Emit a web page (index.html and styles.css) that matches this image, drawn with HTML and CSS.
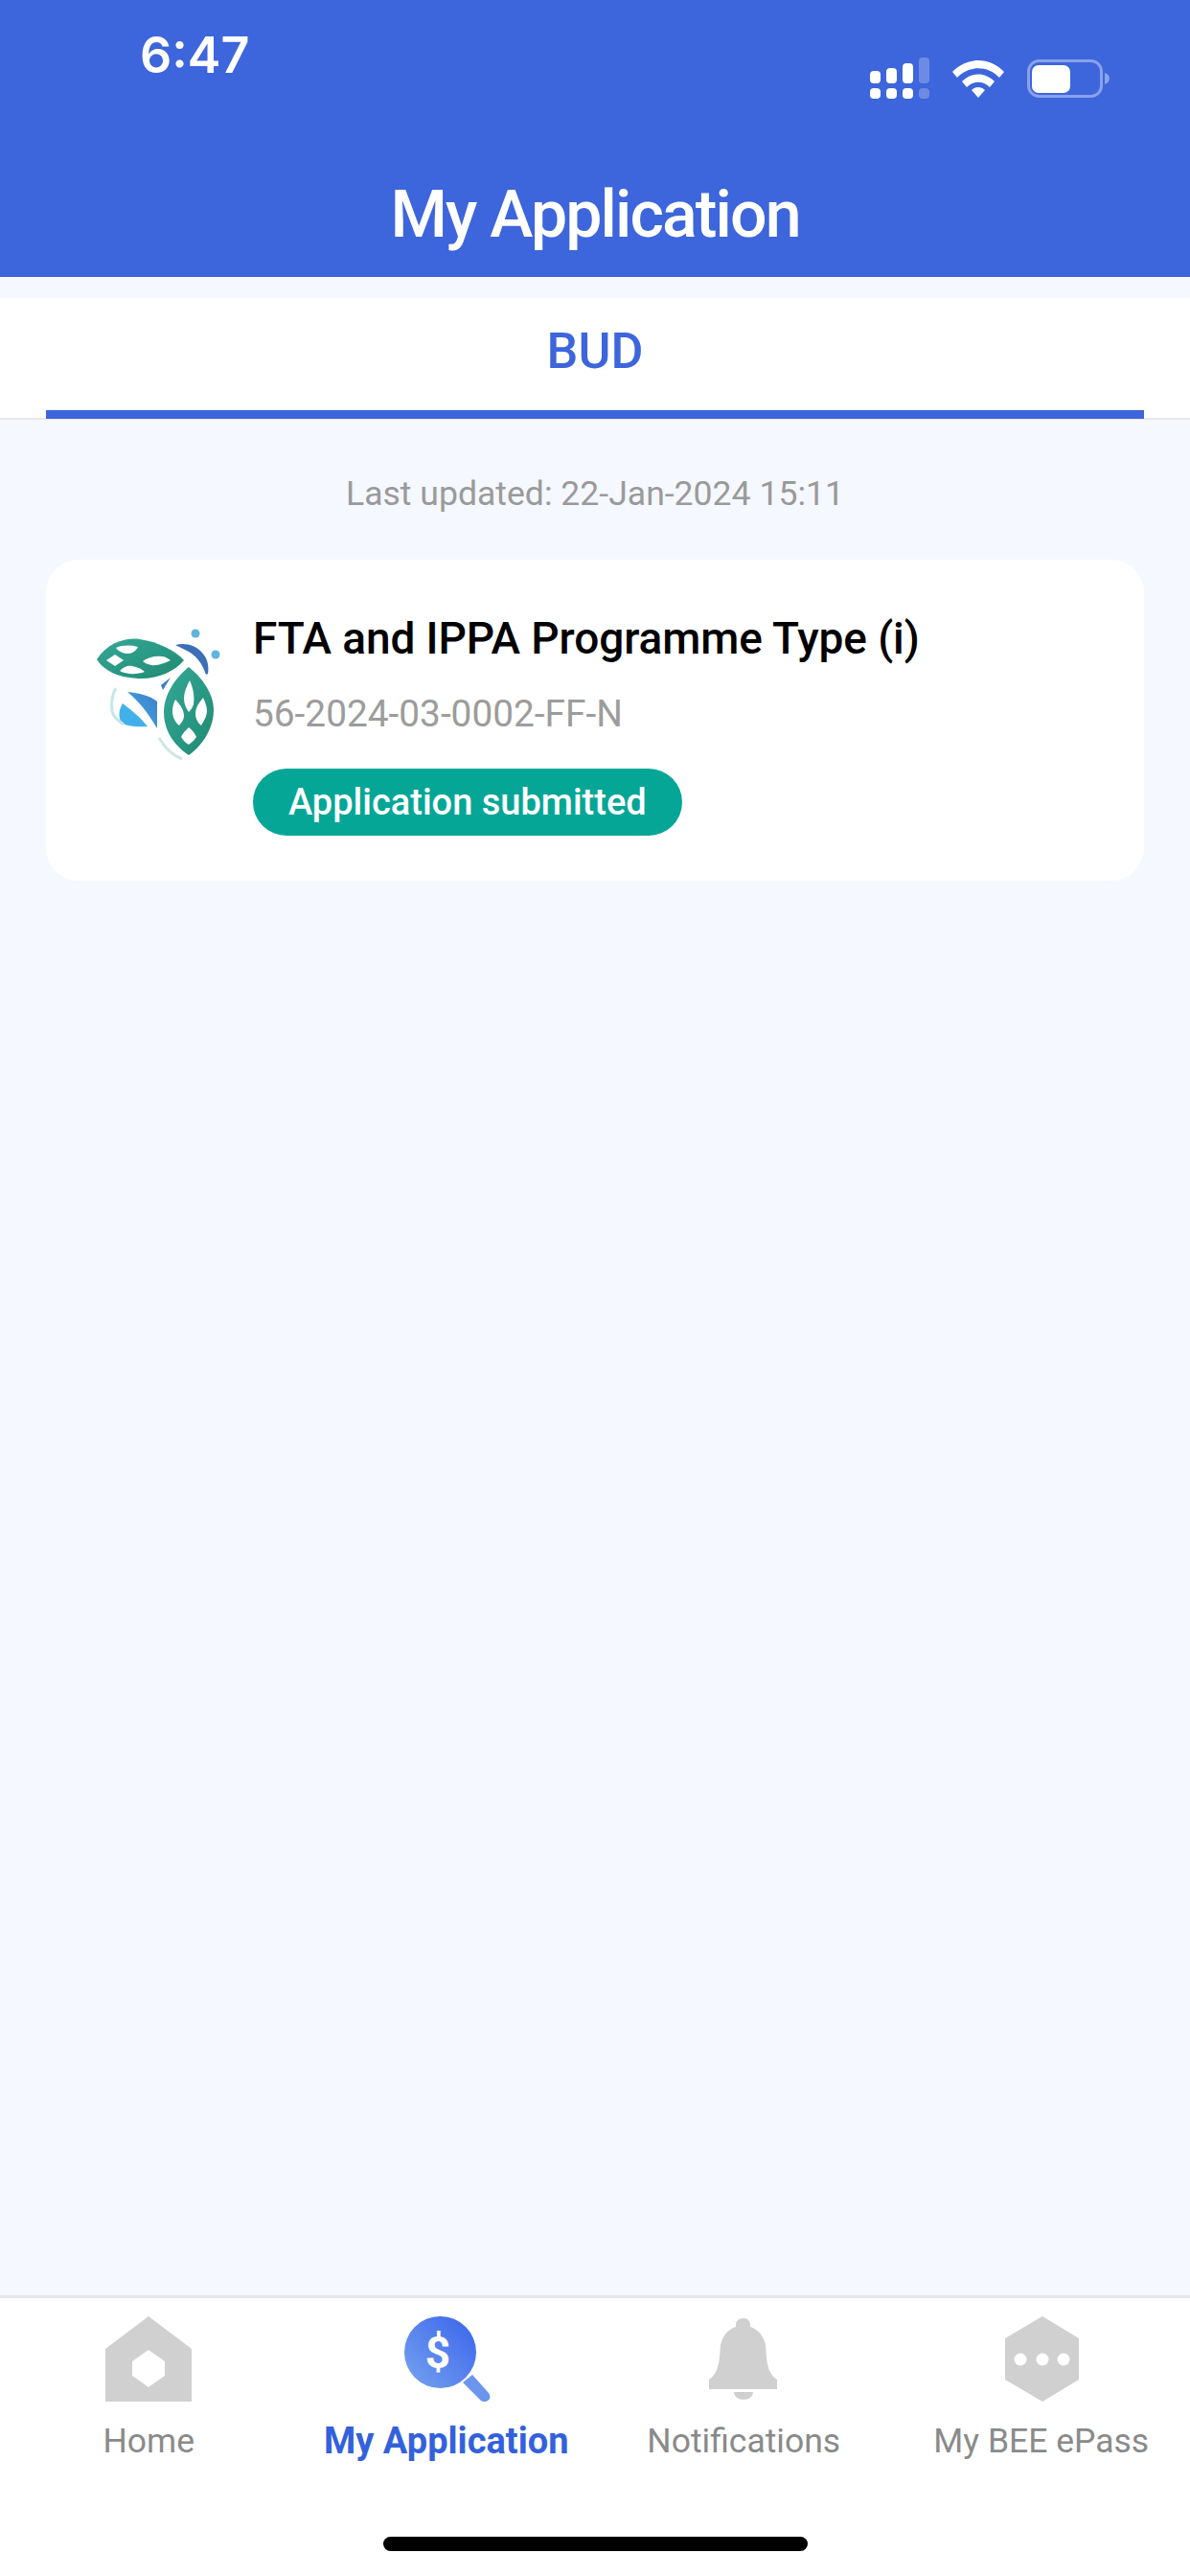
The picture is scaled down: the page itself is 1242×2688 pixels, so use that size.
FILE: index.html
```html
<!DOCTYPE html>
<html lang="en">
<head>
<meta charset="utf-8">
<title>My Application</title>
<link rel="stylesheet" href="styles.css">
</head>
<body>
<div class="app">
  <header class="header">
    <div class="status">
      <span class="time">6:47</span>
      <div class="status-icons">
        <svg class="ic-signal" width="62" height="43" viewBox="0 0 62 43">
          <g fill="#fff">
            <rect x="0" y="14" width="11" height="13" rx="4"/><rect x="17" y="11" width="11" height="16" rx="4"/><rect x="34" y="6" width="11" height="21" rx="4"/>
            <rect x="0" y="32" width="11" height="11" rx="4"/><rect x="17" y="32" width="11" height="11" rx="4"/><rect x="34" y="32" width="11" height="11" rx="4"/>
          </g>
          <g fill="#fff" fill-opacity=".25">
            <rect x="51" y="0" width="11" height="27" rx="4"/><rect x="51" y="32" width="11" height="11" rx="4"/>
          </g>
        </svg>
        <svg class="ic-wifi" width="54" height="40" viewBox="0 0 54 40">
          <path d="M0 13C15-3 39-3 54 13l-5 6C37 6 17 6 5 19z" fill="#fff"/>
          <path d="M10 23c10-10 24-10 34 0l-5 6c-7-7-17-7-24 0z" fill="#fff"/>
          <path d="M20 32c4-4 10-4 14 0l-7 8z" fill="#fff"/>
        </svg>
        <svg class="ic-batt" width="86" height="40" viewBox="0 0 86 40">
          <rect x="1.5" y="1.5" width="76" height="37" rx="11" fill="none" stroke="#fff" stroke-opacity=".4" stroke-width="3"/>
          <rect x="5" y="6" width="40" height="29" rx="7" fill="#fff"/>
          <path d="M81 14c3 1 5 3 5 6s-2 5-5 6z" fill="#fff" fill-opacity=".4"/>
        </svg>
      </div>
    </div>
    <h1 class="title">My Application</h1>
  </header>
  <div class="gap-band"></div>
  <nav class="tabs"><div class="tab">BUD</div></nav>
  <main class="content">
    <p class="updated">Last updated: 22-Jan-2024 15:11</p>
    <article class="card">
      <svg class="logo" width="170" height="160" viewBox="0 0 170 160">
        <defs>
          <linearGradient id="lf" x1="0" y1="0" x2="1" y2="1"><stop offset="0" stop-color="#35a897"/><stop offset="1" stop-color="#1f8a72"/></linearGradient>
          <linearGradient id="bl" x1="0" y1="1" x2="1" y2="0"><stop offset="0" stop-color="#41b0e8"/><stop offset="1" stop-color="#3d7dc8"/></linearGradient>
        </defs>
        <path d="M21 48C33 30 52 25 66 27c20 3 37 12 46 22-9 11-27 20-48 19C44 67 28 60 21 48z" fill="url(#lf)"/>
        <g fill="#fff">
          <path d="M31 49l9-6 9 6-9 6z"/>
          <path d="M41 36c7-3 15-3 23-1-2 4-6 7-10 7-5 0-10-2-13-6z"/>
          <path d="M45 60c4-4 8-6 13-5 5 1 10 3 13 6-8 3-19 3-26-1z"/>
          <path d="M69 50c5-4 13-6 20-5 3 0 6 2 9 4-6 3-14 6-20 5-4-1-7-2-9-4z"/>
        </g>
        <path d="M117 56c14 11 26 28 26 45 0 20-13 38-26 47-15-10-26-25-26-45 0-18 12-36 26-47z" fill="url(#lf)"/>
        <g fill="#fff">
          <path d="M118 70c4 9 5 17 4 25-1 3-3 6-5 8-3-4-5-9-5-14 0-7 3-13 6-19z"/>
          <path d="M103 90c5 5 9 11 9 17 0 3-2 7-5 10-5-4-7-10-7-15 0-4 1-8 3-12z"/>
          <path d="M132 88c2 4 4 9 4 14 0 5-3 10-6 15-4-3-6-8-6-12 0-7 4-12 8-17z"/>
          <path d="M117 119c4 3 6 6 8 10-2 3-5 6-8 8-4-2-6-5-8-8 2-4 5-7 8-10z"/>
        </g>
        <circle cx="124" cy="21" r="4.5" fill="#5fb3dd"/>
        <circle cx="145" cy="43" r="4.5" fill="#5fb3dd"/>
        <path d="M103 33c12-3 24 1 31 12 3 5 4 12 3 18l-2 1c-4-12-11-21-20-25-4-2-8-4-12-6z" fill="#3b6fb8"/>
        <path d="M88 75l10-8-8 13z" fill="#3b7fc4"/>
        <path d="M53 82c12 1 24 4 31 10v28c-5-8-14-24-31-38z" fill="url(#bl)"/>
        <path d="M48 94c9 7 18 14 26 24-10 1-22 0-27-4-4-5-3-14 1-20z" fill="#42b1e9"/>
        <path d="M41 78c-4 6-5 14-4 24 1 6 6 10 12 14" fill="none" stroke="#c3e6ea" stroke-width="3"/>
        <path d="M86 130c6 10 13 18 24 22" fill="none" stroke="#cfe6e4" stroke-width="3"/>
      </svg>
      <div class="card-body">
        <h2 class="card-title">FTA and IPPA Programme Type (i)</h2>
        <p class="card-no">56-2024-03-0002-FF-N</p>
        <span class="pill">Application submitted</span>
      </div>
    </article>
  </main>
  <footer class="tabbar">
    <div class="tabbar-items">
      <div class="item">
        <svg width="92" height="89" viewBox="0 0 92 89"><path fill-rule="evenodd" fill="#d0d0d0" d="M46 0l45 34v55H1V34zM46 35L29 47v15l17 12 17-12V47z"/></svg>
        <span class="label">Home</span>
      </div>
      <div class="item item-active">
        <svg width="92" height="89" viewBox="0 0 92 89">
          <defs><linearGradient id="mg" x1="0" y1="1" x2="1" y2="0"><stop offset="0" stop-color="#76a3ef"/><stop offset="1" stop-color="#3a63ec"/></linearGradient></defs>
          <ellipse cx="39.5" cy="37.5" rx="37.5" ry="37.5" fill="url(#mg)"/>
          <path d="M63 69l10-8 17 19c2 3 2 6-1 8-3 2-6 1-8-1z" fill="#6c95ee"/>
          <text class="dollar" x="37" y="54" text-anchor="middle">$</text>
        </svg>
        <span class="label">My Application</span>
      </div>
      <div class="item">
        <svg width="92" height="89" viewBox="0 0 92 89"><path fill="#d0d0d0" d="M46 2c4 0 7 3 7 6v3c9 3 14 10 16 19 1 9 0 29 12 36v10H10V66c12-7 11-27 12-36 2-9 7-16 16-19V8c0-3 4-6 8-6z"/><path fill="#d0d0d0" d="M36 79h20c0 5-5 8-10 8s-10-3-10-8z"/></svg>
        <span class="label">Notifications</span>
      </div>
      <div class="item">
        <svg width="92" height="89" viewBox="0 0 92 89"><path fill="#d0d0d0" d="M47 0l38 23v43L47 89 8 66V23z"/><circle cx="24" cy="45" r="6.5" fill="#fff"/><circle cx="47" cy="45" r="6.5" fill="#fff"/><circle cx="69" cy="45" r="6.5" fill="#fff"/></svg>
        <span class="label">My BEE ePass</span>
      </div>
    </div>
    <div class="home-bar"></div>
  </footer>
</div>
</body>
</html>
```
FILE: styles.css
```css
* { box-sizing: border-box; }
html, body { margin: 0; padding: 0; }
body { font-family: Roboto, "Liberation Sans", sans-serif; background: #f5f8ff; }
.app { width: 1242px; height: 2688px; display: flex; flex-direction: column; overflow: hidden; }
.header { height: 289px; background: #3d65dc; color: #fff; display: flex; flex-direction: column; }
.status { height: 186px; padding: 28px 84px 0 146px; display: flex; justify-content: space-between; align-items: flex-start; }
.time { font-family: Inter, sans-serif; font-size: 52px; font-weight: 600; line-height: 60px; letter-spacing: 0; }
.status-icons { display: flex; align-items: flex-end; gap: 24px; margin-top: 32px; }
.ic-wifi, .ic-batt { margin-bottom: 1px; }
.title { margin: 0; font-size: 68px; font-weight: 500; line-height: 76px; letter-spacing: -1.9px; text-align: center; }
.gap-band { height: 22px; background: #f5f8ff; }
.tabs { height: 127px; background: #fff; padding: 0 48px; border-bottom: 2px solid #e6e8ec; }
.tab { height: 126px; border-bottom: 9px solid #3d65dc; color: #3d65dc; font-size: 52px; font-weight: 500; line-height: 112px; text-align: center; }
.content { flex: 1; padding: 0 48px; }
.updated { margin: 0; padding-top: 54px; font-size: 35.6px; line-height: 46px; color: #9a9a9a; text-align: center; }
.card { margin-top: 46px; height: 335px; background: #fff; border-radius: 34px; padding: 56px 32px 0; display: flex; align-items: flex-start; gap: 14px; }
.card-body { display: flex; flex-direction: column; align-items: flex-start; }
.logo { flex: none; }
.card-title { margin: 0; font-size: 46px; font-weight: 500; line-height: 52px; letter-spacing: -.1px; color: #000; }
.card-no { margin: 29px 0 0; font-size: 38.8px; line-height: 48px; color: #9c9c9c; }
.pill { margin-top: 33px; height: 70px; padding: 0 37px; border-radius: 35px; background: #05a696; color: #fff; font-size: 38px; font-weight: 500; line-height: 70px; }
.tabbar { height: 293px; background: #fff; border-top: 3px solid #e4e6ea; position: relative; }
.tabbar-items { display: grid; grid-template-columns: repeat(4, 1fr); padding: 19px 0 0; }
.item { display: flex; flex-direction: column; align-items: center; gap: 19px; }
.label { font-size: 35.5px; line-height: 44px; color: #8a8a8a; white-space: nowrap; }
.item-active .label { color: #3361dc; font-size: 38px; font-weight: 700; }
.dollar { font-family: Roboto, sans-serif; font-size: 46px; font-weight: 700; fill: #fff; }
.home-bar { position: absolute; left: 400px; top: 249px; width: 443px; height: 15px; border-radius: 8px; background: #000; }
```
